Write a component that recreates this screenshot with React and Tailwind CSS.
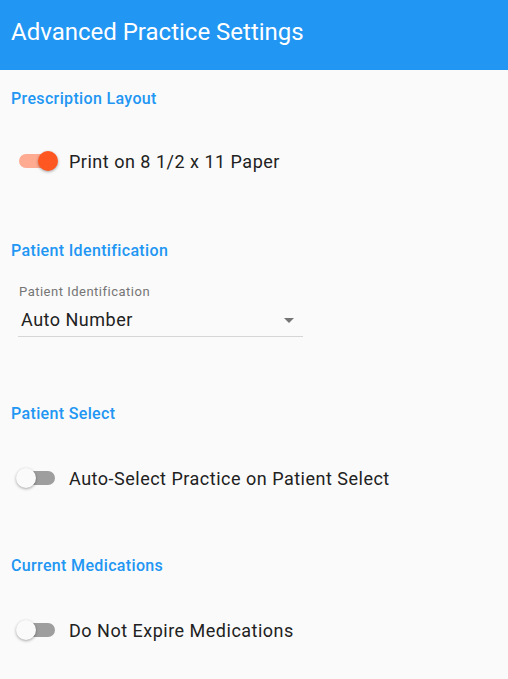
import React from 'react';

function Toggle({ on }) {
  return (
    <div className="relative w-[42px] h-[22px] ml-[16px] shrink-0">
      <div className={`absolute left-[3px] right-[3px] top-[4px] h-[14px] rounded-full ${on ? 'bg-[#ffab91]' : 'bg-[#9e9e9e]'}`} />
      <div
        className={`absolute top-[1px] w-[20px] h-[20px] rounded-full shadow-[0_1px_3px_rgba(0,0,0,0.35)] ${on ? 'right-0 bg-[#ff5722]' : 'left-0 bg-[#fafafa]'}`}
      />
    </div>
  );
}

function SectionTitle({ children, className = '' }) {
  return (
    <div className={`px-[11px] h-[24px] leading-[24px] text-[16px] font-medium tracking-[0.35px] text-[#2196f3] ${className}`}>
      {children}
    </div>
  );
}

function ToggleRow({ on, label, className = '' }) {
  return (
    <div className={`flex items-center h-[48px] ${className}`}>
      <Toggle on={on} />
      <span className="ml-[11px] text-[18px] tracking-[0.5px] text-[#212121]">{label}</span>
    </div>
  );
}

export default function App() {
  return (
    <div className="min-h-screen bg-[#fafafa]" style={{ fontFamily: 'Roboto, "Liberation Sans", sans-serif' }}>
      {/* HEADER */}
      <div className="h-[70px] bg-[#2196f3] flex items-center px-[11px]">
        <h1 className="text-[24px] text-white font-normal -mt-[7px]">Advanced Practice Settings</h1>
      </div>

      <SectionTitle className="mt-[17px]">Prescription Layout</SectionTitle>
      <ToggleRow on label="Print on 8 1/2 x 11 Paper" className="mt-[26px]" />

      <SectionTitle className="mt-[54px]">Patient Identification</SectionTitle>
      <div className="ml-[18px] w-[285px] mt-[21px] border-b border-[#d6d6d6]">
        <div className="pl-[1px] h-[16px] leading-[16px] text-[13px] tracking-[0.5px] text-[#757575]">Patient Identification</div>
        <div className="mt-[8px] h-[24px] pb-[4px] box-content flex items-center justify-between pl-[3px]">
          <span className="text-[18px] leading-[24px] tracking-[0.5px] text-[#212121]">Auto Number</span>
          <svg width="10" height="5" viewBox="0 0 10 5" className="mr-[9px]">
            <path d="M0 0 L10 0 L5 5 Z" fill="#757575" />
          </svg>
        </div>
      </div>

      <SectionTitle className="mt-[65px]">Patient Select</SectionTitle>
      <ToggleRow label="Auto-Select Practice on Patient Select" className="mt-[28px]" />

      <SectionTitle className="mt-[52px]">Current Medications</SectionTitle>
      <ToggleRow label="Do Not Expire Medications" className="mt-[28px]" />
    </div>
  );
}
